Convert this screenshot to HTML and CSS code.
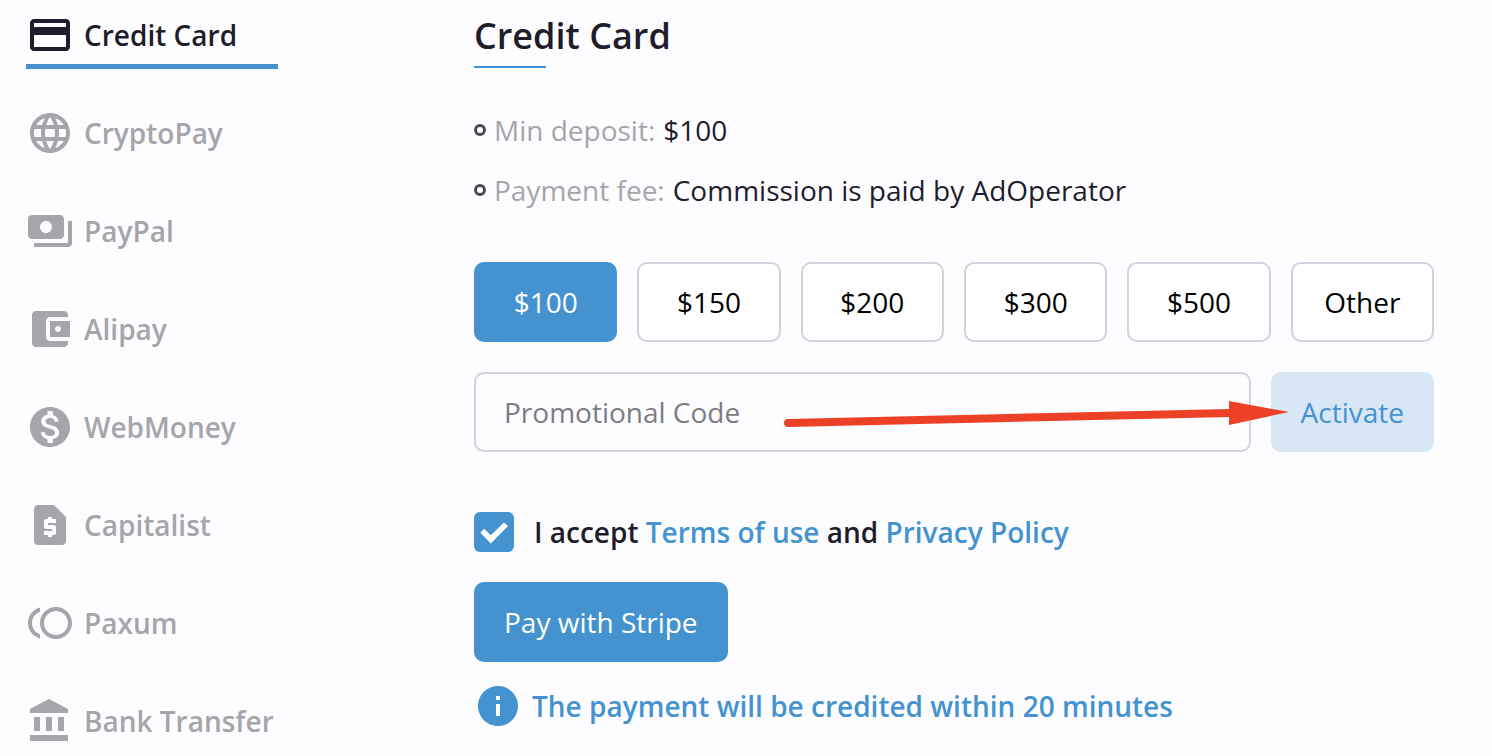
FILE: index.html
```html
<!DOCTYPE html>
<html lang="en">
<head>
<meta charset="UTF-8">
<meta name="viewport" content="width=device-width, initial-scale=1.0">
<title>Payment</title>
<link rel="stylesheet" href="styles.css">
</head>
<body>
<div class="wrap">
    <nav class="methods">
        <a href="#" class="active">
            <svg viewBox="0 0 24 24"><path d="M20 4H4c-1.11 0-1.99.89-1.99 2L2 18c0 1.11.89 2 2 2h16c1.11 0 2-.89 2-2V6c0-1.11-.89-2-2-2zm0 14H4v-6h16v6zm0-10H4V6h16v2z"/></svg>
            Credit Card
        </a>
        <a href="#">
            <svg viewBox="0 0 24 24"><path d="M11.99 2C6.47 2 2 6.48 2 12s4.47 10 9.99 10C17.52 22 22 17.52 22 12S17.52 2 11.99 2zm6.93 6h-2.95c-.32-1.25-.78-2.45-1.38-3.56 1.84.63 3.37 1.91 4.33 3.56zM12 4.04c.83 1.2 1.48 2.53 1.91 3.96h-3.82c.43-1.43 1.08-2.76 1.91-3.96zM4.26 14C4.1 13.36 4 12.69 4 12s.1-1.36.26-2h3.38c-.08.66-.14 1.32-.14 2 0 .68.06 1.34.14 2H4.26zm.82 2h2.95c.32 1.25.78 2.45 1.38 3.56-1.84-.63-3.37-1.9-4.33-3.56zm2.95-8H5.08c.96-1.66 2.49-2.93 4.33-3.56C8.81 5.55 8.35 6.75 8.03 8zM12 19.96c-.83-1.2-1.48-2.53-1.91-3.96h3.82c-.43 1.43-1.08 2.76-1.91 3.96zM14.34 14H9.66c-.09-.66-.16-1.32-.16-2 0-.68.07-1.35.16-2h4.68c.09.65.16 1.32.16 2 0 .68-.07 1.34-.16 2zm.25 5.56c.6-1.11 1.06-2.31 1.38-3.56h2.95c-.96 1.65-2.49 2.93-4.33 3.56zM16.36 14c.08-.66.14-1.32.14-2 0-.68-.06-1.34-.14-2h3.38c.16.64.26 1.31.26 2s-.1 1.36-.26 2h-3.38z"/></svg>
            CryptoPay
        </a>
        <a href="#">
            <svg viewBox="0 0 24 24"><path d="M19 14V6c0-1.1-.9-2-2-2H3c-1.1 0-2 .9-2 2v8c0 1.1.9 2 2 2h14c1.1 0 2-.9 2-2zm-9-1c-1.66 0-3-1.34-3-3s1.34-3 3-3 3 1.34 3 3-1.34 3-3 3zm13-6v11c0 1.1-.9 2-2 2H4v-2h17V7h2z"/></svg>
            PayPal
        </a>
        <a href="#">
            <svg viewBox="0 0 24 24"><path d="M21 18v1c0 1.1-.9 2-2 2H5c-1.11 0-2-.9-2-2V5c0-1.1.89-2 2-2h14c1.1 0 2 .9 2 2v1h-9c-1.11 0-2 .9-2 2v8c0 1.1.89 2 2 2h9zm-9-2h10V8H12v8zm4-2.5c-.83 0-1.5-.67-1.5-1.5s.67-1.5 1.5-1.5 1.5.67 1.5 1.5-.67 1.5-1.5 1.5z"/></svg>
            Alipay
        </a>
        <a href="#">
            <svg viewBox="0 0 24 24"><path d="M12 2C6.48 2 2 6.48 2 12s4.48 10 10 10 10-4.48 10-10S17.52 2 12 2zm1.41 16.09V20h-2.67v-1.93c-1.71-.36-3.16-1.46-3.27-3.4h1.96c.1 1.05.82 1.87 2.65 1.87 1.96 0 2.4-.98 2.4-1.59 0-.83-.44-1.61-2.67-2.14-2.48-.6-4.18-1.62-4.18-3.67 0-1.72 1.39-2.84 3.11-3.21V4h2.67v1.95c1.86.45 2.79 1.86 2.85 3.39H14.3c-.05-1.11-.64-1.87-2.22-1.87-1.5 0-2.4.68-2.4 1.64 0 .84.65 1.39 2.67 1.91s4.18 1.39 4.18 3.91c-.01 1.83-1.38 2.83-3.12 3.16z"/></svg>
            WebMoney
        </a>
        <a href="#">
            <svg viewBox="0 0 24 24"><path d="M14 2H6C4.9 2 4.01 2.9 4.01 4L4 20c0 1.1.89 2 1.99 2H18c1.1 0 2-.9 2-2V8l-6-6zm1 9h-4v1h3c.55 0 1 .45 1 1v3c0 .55-.45 1-1 1h-1v1h-2v-1H9v-2h4v-1h-3c-.55 0-1-.45-1-1v-3c0-.55.45-1 1-1h1V8h2v1h2v2z"/></svg>
            Capitalist
        </a>
        <a href="#">
            <svg viewBox="0 0 24 24"><path d="M15 4c-4.42 0-8 3.58-8 8s3.58 8 8 8 8-3.58 8-8-3.58-8-8-8zm0 14c-3.31 0-6-2.69-6-6s2.69-6 6-6 6 2.69 6 6-2.69 6-6 6zM3 12c0-2.61 1.67-4.83 4-5.65V4.26C3.55 5.15 1 8.27 1 12s2.55 6.85 6 7.74v-2.09c-2.33-.82-4-3.04-4-5.65z"/></svg>
            Paxum
        </a>
        <a href="#">
            <svg viewBox="0 0 24 24"><path d="M4 10v7h3v-7H4zm6 0v7h3v-7h-3zM2 22h19v-3H2v3zm14-12v7h3v-7h-3zm-4.5-9L2 6v2h19V6l-9.5-5z"/></svg>
            Bank Transfer
        </a>
    </nav>
    <main class="pay">
        <h1>Credit Card</h1>
        <ul class="info">
            <li><span>Min deposit:</span> $100</li>
            <li><span>Payment fee:</span> Commission is paid by AdOperator</li>
        </ul>
        <form>
            <div class="sums">
                <button type="button" class="active">$100</button>
                <button type="button">$150</button>
                <button type="button">$200</button>
                <button type="button">$300</button>
                <button type="button">$500</button>
                <button type="button">Other</button>
            </div>
            <div class="promo">
                <input type="text" placeholder="Promotional Code" aria-label="Promotional Code">
                <button type="button">Activate</button>
                <svg class="arrow" viewBox="0 0 504 26"><path d="M4 22L446 12" stroke="#ec4126" stroke-width="8" stroke-linecap="round"/><path d="M445 0L505 11L445 24z" fill="#ec4126"/></svg>
            </div>
            <div class="accept">
                <input type="checkbox" id="accept" checked>
                <label for="accept">I accept <a href="#">Terms of use</a> and <a href="#">Privacy Policy</a></label>
            </div>
            <button type="submit" class="submit">Pay with Stripe</button>
        </form>
        <p class="note">
            <svg viewBox="0 0 24 24"><path d="M12 2C6.48 2 2 6.48 2 12s4.48 10 10 10 10-4.48 10-10S17.52 2 12 2zm1 15h-2v-6h2v6zm0-8h-2V7h2v2z"/></svg>
            The payment will be credited within 20 minutes
        </p>
    </main>
</div>
</body>
</html>
```
FILE: styles.css
```css
*, *::before, *::after {
    box-sizing: border-box;
}
body {
    margin: 0;
    background: #fdfdff;
    color: #1f1d2b;
    font: 28px/40px "Open Sans", sans-serif;
}
a {
    color: #4493d0;
    text-decoration: none;
}
button, input {
    margin: 0;
    font: inherit;
}
button {
    height: 80px;
    padding: 0 30px;
    border: 0;
    border-radius: 10px;
    cursor: pointer;
}
.wrap {
    display: grid;
    grid-template-columns: 252px 1fr;
    column-gap: 196px;
    padding: 11px 58px 10px 26px;
}

/* payment methods */
.methods {
    display: flex;
    flex-direction: column;
    gap: 40px;
}
.methods a {
    display: flex;
    align-items: center;
    gap: 10px;
    padding-bottom: 5px;
    border-bottom: 5px solid transparent;
    color: #a5a5aa;
    font-weight: 600;
    white-space: nowrap;
}
.methods .active {
    color: #1f1d2b;
    border-color: #4493d0;
}
.methods svg, .note svg {
    flex: none;
    width: 48px;
    height: 48px;
    fill: currentColor;
}

/* payment form */
h1 {
    margin: 0 0 42px;
    font-size: 36px;
    line-height: 50px;
    font-weight: 600;
}
h1::after {
    content: "";
    display: block;
    width: 72px;
    height: 2px;
    margin-top: 5px;
    background: #4493d0;
}
.info {
    margin: 0 0 52px;
    padding: 0;
    list-style: none;
}
.info li {
    display: flex;
    align-items: center;
    gap: 8px;
}
.info li + li {
    margin-top: 20px;
}
.info li::before {
    content: "";
    width: 12px;
    height: 12px;
    border: 3px solid #4c4a55;
    border-radius: 50%;
}
.info span {
    color: #a5a5aa;
}
.sums {
    display: grid;
    grid-template-columns: repeat(6, 1fr);
    gap: 20px;
}
.sums button {
    padding: 0;
    border: 2px solid #cdd4dd;
    background: #fff;
    color: #000;
}
.sums .active {
    border-color: #4493d0;
    background: #4493d0;
    color: #fff;
}
.promo {
    position: relative;
    display: flex;
    gap: 20px;
    margin: 30px 0 60px;
}
.promo input {
    flex: 1;
    min-width: 0;
    height: 80px;
    padding: 0 28px;
    border: 2px solid #cdd4dd;
    border-radius: 10px;
    background: transparent;
}
.promo input::placeholder {
    color: #7b7b82;
}
.promo button {
    background: #d8e7f5;
    color: #4493d0;
}
.arrow {
    position: absolute;
    top: 29px;
    right: 146px;
    width: 504px;
    height: 26px;
    overflow: visible;
    pointer-events: none;
}
.accept {
    display: flex;
    align-items: center;
    gap: 20px;
    margin-bottom: 30px;
    font-weight: 600;
}
.accept input {
    appearance: none;
    width: 40px;
    height: 40px;
    border: 2px solid #cdd4dd;
    border-radius: 6px;
}
.accept input:checked {
    border: 0;
    background: #4493d0;
}
.accept input:checked::before {
    content: "";
    display: block;
    height: 40px;
    background: #fff;
    clip-path: polygon(16% 52%, 42% 79%, 85% 35%, 75% 26%, 42% 58%, 25% 42%);
}
.submit {
    background: #4493d0;
    color: #fff;
}
.note {
    display: flex;
    align-items: center;
    gap: 10px;
    margin: 20px 0 0;
    color: #4493d0;
    font-weight: 600;
}
```
